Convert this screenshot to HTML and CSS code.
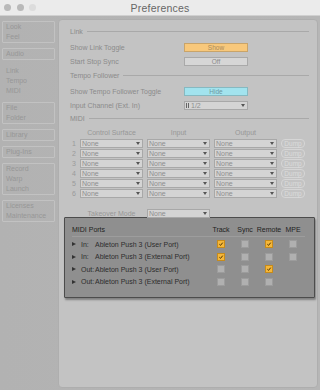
FILE: index.html
```html
<!DOCTYPE html>
<html lang="en">
<head>
  <meta charset="UTF-8">
  <title>Preferences</title>
  <link rel="stylesheet" href="styles.css">
</head>
<body>
  <div class="window">
    <div class="titlebar">
      <div class="lights">
        <span class="light"></span>
        <span class="light"></span>
        <span class="light light-off"></span>
      </div>
      <div class="title">Preferences</div>
    </div>

    <div class="main-area">
      <nav class="tabs">
        <div class="tab">Look<br>Feel</div>
        <div class="tab">Audio</div>
        <div class="tab tab-active">Link<br>Tempo<br>MIDI</div>
        <div class="tab">File<br>Folder</div>
        <div class="tab">Library</div>
        <div class="tab">Plug-Ins</div>
        <div class="tab">Record<br>Warp<br>Launch</div>
        <div class="tab">Licenses<br>Maintenance</div>
      </nav>

      <div class="panel">
        <div class="section-head">Link</div>
        <div class="pref-row">
          <span>Show Link Toggle</span>
          <span class="toggle toggle-show">Show</span>
        </div>
        <div class="pref-row">
          <span>Start Stop Sync</span>
          <span class="toggle">Off</span>
        </div>

        <div class="section-head section-tempo">Tempo Follower</div>
        <div class="pref-row">
          <span>Show Tempo Follower Toggle</span>
          <span class="toggle toggle-hide">Hide</span>
        </div>
        <div class="pref-row">
          <span>Input Channel (Ext. In)</span>
          <span class="select"><span class="select-text"><span class="stereo"></span>1/2</span></span>
        </div>

        <div class="section-head section-midi">MIDI</div>
        <div class="midi-grid">
          <span></span>
          <span class="col-head">Control Surface</span>
          <span class="col-head">Input</span>
          <span class="col-head">Output</span>
          <span></span>

          <span class="num">1</span>
          <span class="select"><span class="select-text">None</span></span>
          <span class="select"><span class="select-text">None</span></span>
          <span class="select"><span class="select-text">None</span></span>
          <span class="dump">Dump</span>

          <span class="num">2</span>
          <span class="select"><span class="select-text">None</span></span>
          <span class="select"><span class="select-text">None</span></span>
          <span class="select"><span class="select-text">None</span></span>
          <span class="dump">Dump</span>

          <span class="num">3</span>
          <span class="select"><span class="select-text">None</span></span>
          <span class="select"><span class="select-text">None</span></span>
          <span class="select"><span class="select-text">None</span></span>
          <span class="dump">Dump</span>

          <span class="num">4</span>
          <span class="select"><span class="select-text">None</span></span>
          <span class="select"><span class="select-text">None</span></span>
          <span class="select"><span class="select-text">None</span></span>
          <span class="dump">Dump</span>

          <span class="num">5</span>
          <span class="select"><span class="select-text">None</span></span>
          <span class="select"><span class="select-text">None</span></span>
          <span class="select"><span class="select-text">None</span></span>
          <span class="dump">Dump</span>

          <span class="num">6</span>
          <span class="select"><span class="select-text">None</span></span>
          <span class="select"><span class="select-text">None</span></span>
          <span class="select"><span class="select-text">None</span></span>
          <span class="dump">Dump</span>
        </div>

        <div class="midi-grid takeover">
          <span></span>
          <span class="col-head">Takeover Mode</span>
          <span class="select"><span class="select-text">None</span></span>
        </div>

        <div class="ports">
          <div class="port-row port-head">
            <span>MIDI Ports</span>
            <span class="center">Track</span>
            <span class="center">Sync</span>
            <span class="center">Remote</span>
            <span class="center">MPE</span>
          </div>
          <div class="port-row">
            <span class="port-name"><i class="arrow"></i><span class="dir">In:</span>Ableton Push 3 (User Port)</span>
            <span class="center"><span class="check on"><svg viewBox="0 0 8 8"><path d="M1.8 4.3 L3.4 5.8 L6.3 2.2"/></svg></span></span>
            <span class="center"><span class="check"></span></span>
            <span class="center"><span class="check on"><svg viewBox="0 0 8 8"><path d="M1.8 4.3 L3.4 5.8 L6.3 2.2"/></svg></span></span>
            <span class="center"><span class="check"></span></span>
          </div>
          <div class="port-row">
            <span class="port-name"><i class="arrow"></i><span class="dir">In:</span>Ableton Push 3 (External Port)</span>
            <span class="center"><span class="check on"><svg viewBox="0 0 8 8"><path d="M1.8 4.3 L3.4 5.8 L6.3 2.2"/></svg></span></span>
            <span class="center"><span class="check"></span></span>
            <span class="center"><span class="check"></span></span>
            <span class="center"><span class="check"></span></span>
          </div>
          <div class="port-row">
            <span class="port-name"><i class="arrow"></i><span class="dir">Out:</span>Ableton Push 3 (User Port)</span>
            <span class="center"><span class="check"></span></span>
            <span class="center"><span class="check"></span></span>
            <span class="center"><span class="check on"><svg viewBox="0 0 8 8"><path d="M1.8 4.3 L3.4 5.8 L6.3 2.2"/></svg></span></span>
            <span></span>
          </div>
          <div class="port-row">
            <span class="port-name"><i class="arrow"></i><span class="dir">Out:</span>Ableton Push 3 (External Port)</span>
            <span class="center"><span class="check"></span></span>
            <span class="center"><span class="check"></span></span>
            <span class="center"><span class="check"></span></span>
            <span></span>
          </div>
        </div>
      </div>
    </div>
  </div>
</body>
</html>
```

FILE: styles.css
```css
body {
  margin: 0;
  font-family: "Liberation Sans", Arial, sans-serif;
  font-size: 7px;
  background: #b5b5b5;
}

.window {
  width: 320px;
  height: 390px;
  display: flex;
  flex-direction: column;
  background: linear-gradient(90deg, #b2b2b2, #b6b6b6);
  overflow: hidden;
}

/* title bar */
.titlebar {
  height: 15px;
  flex: none;
  display: grid;
  grid-template-columns: 1fr auto 1fr;
  align-items: center;
  background: #ebebeb;
  border-bottom: 1px solid #d0d0d0;
}

.lights {
  display: flex;
  gap: 5.5px;
  padding-left: 4px;
}

.light {
  width: 7px;
  height: 7px;
  border-radius: 50%;
  background: #b9b9b9;
}

.light-off {
  background: #dcdcdc;
}

.title {
  font-size: 10.5px;
  color: #666;
  letter-spacing: 0.2px;
}

.main-area {
  flex: 1;
  display: flex;
  padding: 3px 2px 2px 0;
}

/* left tabs */
.tabs {
  width: 58px;
  flex: none;
  padding: 2px 0 0 2px;
  box-sizing: border-box;
}

.tab {
  width: 53px;
  box-sizing: border-box;
  border: 1px solid #c2c2c2;
  border-radius: 1px;
  padding-left: 3px;
  line-height: 10px;
  color: #979797;
  margin-bottom: 5px;
}

.tab-active {
  border-color: transparent;
}

/* main panel */
.panel {
  flex: 1;
  background: #c3c3c3;
  border: 1px solid #aeaeae;
  border-radius: 4px;
  padding: 5px 8px 0 11px;
  color: #8b8b8b;
}

.section-head {
  display: flex;
  align-items: center;
  gap: 4px;
  height: 12px;
  margin-bottom: 3px;
}

.section-head::after {
  content: "";
  flex: 1;
  border-top: 1px solid #a9a9a9;
}

.section-tempo {
  margin-top: 1px;
}

.pref-row {
  display: grid;
  grid-template-columns: 114px 64px;
  height: 14px;
  align-items: center;
}

.toggle {
  height: 9px;
  box-sizing: border-box;
  border: 1px solid #a9a9a9;
  background: #d6d6d6;
  text-align: center;
  line-height: 7px;
  font-size: 6.5px;
  color: #8a8a8a;
}

.toggle-show {
  background: #f8c87b;
  border-color: #c9a469;
  color: #a98a5a;
}

.toggle-hide {
  background: #a2e3ee;
  border-color: #86b9c1;
  color: #6d979d;
}

.select {
  height: 9px;
  box-sizing: border-box;
  border: 1px solid #a8a8a8;
  background: #d4d4d4;
  display: flex;
  align-items: center;
  justify-content: space-between;
  padding: 0 2px 0 1px;
  color: #8e8e8e;
}

.select::after {
  content: "";
  border-left: 2px solid transparent;
  border-right: 2px solid transparent;
  border-top: 3px solid #555;
}

.select-text {
  display: flex;
  align-items: center;
  gap: 2px;
  line-height: 7px;
}

.stereo {
  width: 1px;
  height: 5px;
  border-left: 1px solid #666;
  border-right: 1px solid #666;
}

/* MIDI control surfaces */
.midi-grid {
  display: grid;
  grid-template-columns: 6px 63px 63px 63px 24px;
  column-gap: 4px;
  grid-template-rows: 11px;
  grid-auto-rows: 10px;
  align-items: center;
}

.col-head {
  text-align: center;
  color: #979797;
}

.num {
  padding-left: 2px;
  color: #9a9a9a;
}

.dump {
  height: 9px;
  box-sizing: border-box;
  border: 1px solid #d6d6d6;
  border-radius: 4px;
  text-align: center;
  line-height: 7px;
  font-size: 6.5px;
  color: #dcdcdc;
}

.takeover {
  margin-top: 10px;
  grid-template-rows: 10px;
}

/* MIDI ports dialog */
.ports {
  margin: -1px -6px 0 -6px;
  background: #8f8f8f;
  border: 1px solid #4c4c4c;
  border-radius: 1px;
  box-shadow: 1px 2px 2px rgba(0, 0, 0, 0.35);
  padding: 4px 9px 9px 7px;
  color: #2d2d2d;
}

.port-row {
  display: grid;
  grid-template-columns: 1fr 24px 24px 24px 24px;
  height: 12.5px;
  align-items: center;
}

.port-head {
  height: 14px;
  border-bottom: 1px solid #9d9d9d;
  margin-bottom: 1px;
  color: #222;
}

.center {
  display: flex;
  justify-content: center;
}

.port-name {
  display: flex;
  align-items: center;
}

.arrow {
  width: 0;
  height: 0;
  border-left: 4px solid #333;
  border-top: 2.5px solid transparent;
  border-bottom: 2.5px solid transparent;
  margin-right: 5px;
}

.dir {
  width: 14px;
  flex: none;
}

.check {
  width: 8px;
  height: 8px;
  box-sizing: border-box;
  border: 1px solid #9c9c9c;
  background: #b0b0b0;
  display: flex;
}

.check.on {
  background: #f5b73a;
  border-color: #c68b1c;
}

.check svg {
  width: 6px;
  height: 6px;
}

.check path {
  fill: none;
  stroke: #4a3000;
  stroke-width: 1.3;
}
```
